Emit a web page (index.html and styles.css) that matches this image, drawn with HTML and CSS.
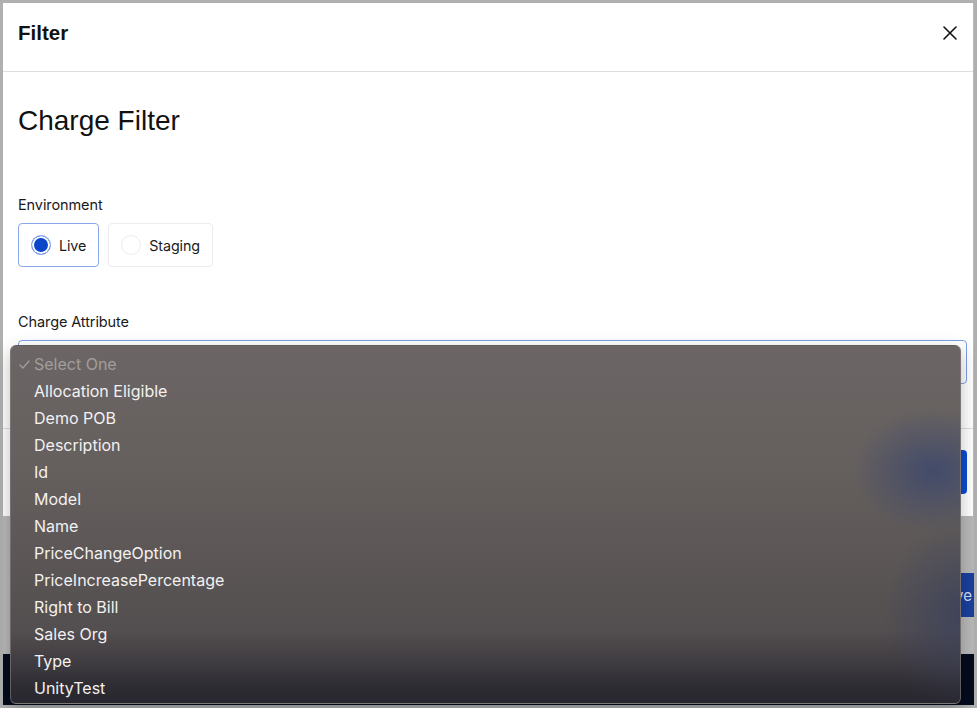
FILE: index.html
```
<!DOCTYPE html>
<html lang="en">
<head>
<meta charset="utf-8">
<title>Filter</title>
<link rel="stylesheet" href="styles.css">
</head>
<body>
<div class="frame">
  <div class="page">
    <div class="page-actions">
      <button class="page-save" type="button">Save</button>
    </div>
    <div class="page-footer"></div>
  </div>

  <div class="modal">
    <div class="modal-header">
      <h2 class="modal-title">Filter</h2>
      <button class="close" type="button" aria-label="Close">
        <svg width="14" height="14" viewBox="0 0 14 14"><path d="M1 1 L13 13 M13 1 L1 13" stroke="#111" stroke-width="1.6" fill="none" stroke-linecap="round"/></svg>
      </button>
    </div>
    <div class="modal-body">
      <h1 class="page-title">Charge Filter</h1>
      <div class="field-label first">Environment</div>
      <div class="radio-group">
        <label class="radio-card checked"><span class="radio"></span><span>Live</span></label>
        <label class="radio-card"><span class="radio"></span><span>Staging</span></label>
      </div>
      <div class="field-label">Charge Attribute</div>
      <div class="select-box"></div>
    </div>
    <div class="modal-footer">
      <button class="apply" type="button">Apply</button>
    </div>
  </div>

  <div class="menu">
    <div class="item disabled"><span class="check"><svg width="11" height="9" viewBox="0 0 11 9"><path d="M1 5 L4 8 L10 1" stroke="#a29d9b" stroke-width="1.3" fill="none" stroke-linecap="round" stroke-linejoin="round"/></svg></span>Select One</div>
    <div class="item"><span class="check"></span>Allocation Eligible</div>
    <div class="item"><span class="check"></span>Demo POB</div>
    <div class="item"><span class="check"></span>Description</div>
    <div class="item"><span class="check"></span>Id</div>
    <div class="item"><span class="check"></span>Model</div>
    <div class="item"><span class="check"></span>Name</div>
    <div class="item"><span class="check"></span>PriceChangeOption</div>
    <div class="item"><span class="check"></span>PriceIncreasePercentage</div>
    <div class="item"><span class="check"></span>Right to Bill</div>
    <div class="item"><span class="check"></span>Sales Org</div>
    <div class="item"><span class="check"></span>Type</div>
    <div class="item"><span class="check"></span>UnityTest</div>
  </div>
</div>
</body>
</html>
```
FILE: styles.css
```
* { box-sizing: border-box; }
html, body { margin: 0; padding: 0; }
body {
  background: #b2b2b2;
  font-family: Inter, "Noto Sans", sans-serif;
  color: #111;
}
.frame {
  position: relative;
  width: 977px;
  height: 708px;
  padding: 3px 3px 3px 3px;
  background: #b0b0b0;
  overflow: hidden;
}
.page {
  height: 100%;
  width: 971px;
  background: #b9b9b9;
  display: flex;
  flex-direction: column;
  justify-content: flex-end;
  overflow: hidden;
}
.page-actions {
  display: flex;
  justify-content: flex-end;
  margin-bottom: 37px;
}
.page-save {
  height: 44px;
  margin-right: -16px;
  padding: 0 18px;
  border: 0;
  border-radius: 4px;
  background: #1a409e;
  color: #d9def0;
  font-family: Inter, sans-serif;
  font-size: 15px;
}
.page-footer {
  height: 51px;
  background: #040b1d;
}

.modal {
  position: absolute;
  top: 3px;
  left: 3px;
  width: 970px;
  background: #fff;
}
.modal-header {
  height: 69px;
  border-bottom: 1px solid #dedede;
  display: flex;
  align-items: center;
  justify-content: space-between;
  padding: 0 16px 9px 15px;
}
.modal-title {
  margin: 0;
  font-family: "Liberation Sans", Arial, sans-serif;
  font-size: 20.5px;
  font-weight: 700;
  color: #111;
}
.close {
  border: 0;
  background: none;
  padding: 0;
  width: 14px;
  height: 14px;
  display: block;
}
.close svg { display: block; }
.modal-body {
  padding: 32px 6px 44px 15px;
  display: flex;
  flex-direction: column;
}
.page-title {
  margin: 0;
  font-family: "Liberation Sans", Arial, sans-serif;
  font-weight: 400;
  font-size: 28px;
  line-height: 34px;
  color: #111;
}
.field-label {
  margin-top: 45px;
  font-size: 14.5px;
  line-height: 20px;
  letter-spacing: -0.1px;
  color: #1a1a1a;
}
.field-label.first { margin-top: 57px; }
.radio-group {
  display: flex;
  gap: 9px;
  margin-top: 8px;
}
.radio-card {
  height: 44px;
  display: flex;
  align-items: center;
  gap: 8px;
  padding: 0 12px 0 12px;
  border: 1px solid #ececec;
  border-radius: 4px;
  font-size: 14.3px;
  letter-spacing: -0.1px;
  color: #1a1a1a;
}
.radio-card.checked { border-color: #8aa7ea; }
.radio {
  width: 20px;
  height: 20px;
  border-radius: 50%;
  border: 1px solid #ececec;
  background: #fff;
}
.checked .radio {
  border-color: #8eabef;
  background: #0b46c9;
  box-shadow: inset 0 0 0 2px #fff;
}
.select-box {
  margin-top: 8px;
  height: 44px;
  border: 1px solid #7d9fe7;
  border-radius: 4px;
}
.modal-footer {
  border-top: 1px solid #dedede;
  padding: 21px 6px 22px 15px;
  display: flex;
  justify-content: flex-end;
}
.apply {
  height: 44px;
  width: 92px;
  border: 0;
  border-radius: 4px;
  background: #0b4bd0;
  color: #fff;
  font-family: Inter, sans-serif;
  font-size: 15px;
}

.menu {
  position: absolute;
  left: 10px;
  top: 345px;
  width: 951px;
  height: 359px;
  padding: 5px 0 3px;
  border-radius: 6px;
  border: 1px solid rgba(140, 134, 132, 0.55);
  box-shadow: 0 6px 18px rgba(0, 0, 0, 0.25);
  background:
    radial-gradient(ellipse 80px 62px at 922px 125px, rgba(62, 73, 108, 0.9), rgba(62, 73, 108, 0) 100%),
    radial-gradient(ellipse 80px 95px at 952px 268px, rgba(56, 64, 94, 0.75), rgba(56, 64, 94, 0) 100%),
    linear-gradient(to bottom, #6b6665 0px, #655f5e 120px, #5c5756 210px, #534e4f 285px, #3e3b40 318px, #2e2c33 340px, #27262e 359px);
  font-family: Inter, "Noto Sans", sans-serif;
}
.item {
  height: 27px;
  line-height: 27px;
  display: flex;
  align-items: center;
  padding-left: 8px;
  font-size: 16px;
  color: #f3f1f1;
  white-space: nowrap;
}
.item.disabled { color: #a29d9b; }
.check {
  width: 15px;
  flex: none;
  display: flex;
  align-items: center;
}
.check svg { display: block; }
```
